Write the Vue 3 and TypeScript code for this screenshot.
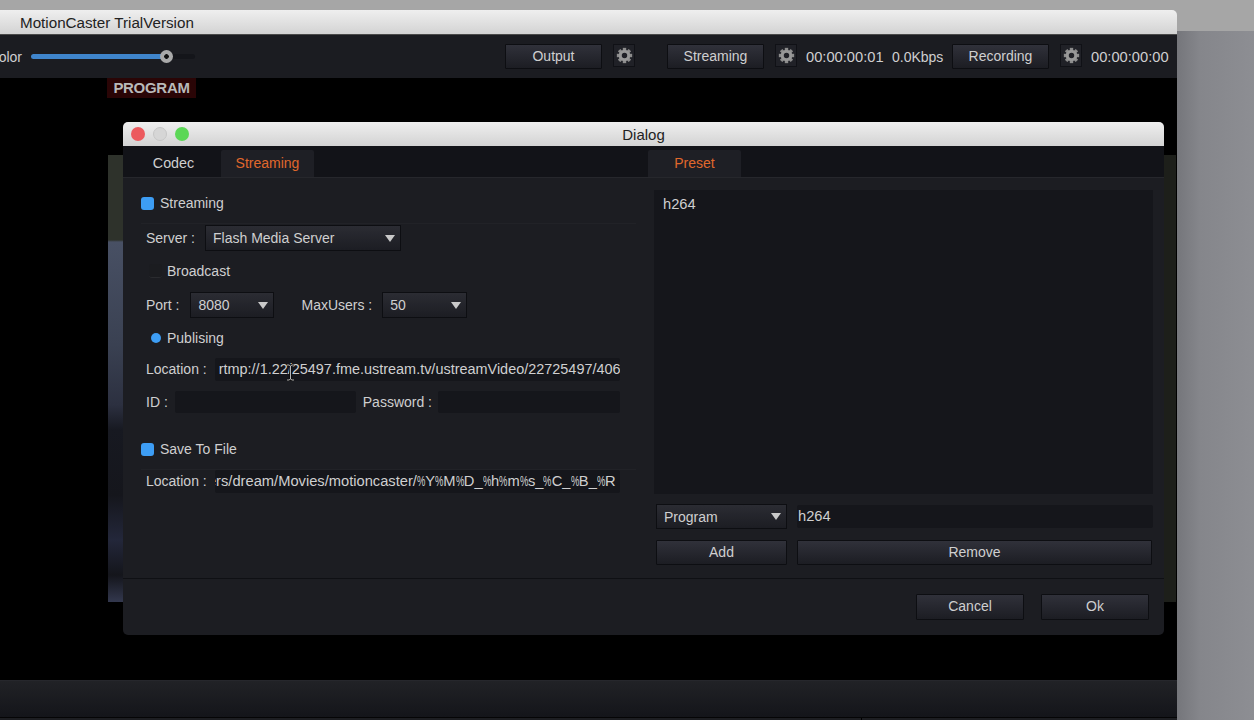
<script setup lang="ts">
const SLIDER_PERCENT = 82.5
const gearTeeth = [0, 45, 90, 135, 180, 225, 270, 315]

const streamUrl = 'rtmp://1.22/25497.fme.ustream.tv/ustreamVideo/22725497/406'
const savePath = 'ers/dream/Movies/motioncaster/%Y%M%D_%h%m%s_%C_%B_%R'
// the % sign is much narrower in the original font, so it gets its own span
const savePathParts = savePath.split(/(%)/).filter(Boolean)
</script>

<template>
  <div class="desktop">
    <svg class="defs" width="0" height="0">
      <symbol id="gear" viewBox="0 0 20 20">
        <rect
          v-for="deg in gearTeeth"
          :key="deg"
          x="8"
          y="1"
          width="4"
          height="5"
          fill="#8c8c8c"
          :transform="`rotate(${deg} 10 10)`"
        />
        <circle cx="10" cy="10" r="5" fill="none" stroke="#989898" stroke-width="3.6" />
      </symbol>
    </svg>

    <div class="main-window">
      <div class="title-bar main-title">MotionCaster TrialVersion</div>

      <div class="toolbar">
        <span class="color-label">Color</span>
        <div class="slider">
          <div class="slider-fill" :style="{ width: `${SLIDER_PERCENT}%` }" />
          <div class="slider-handle" :style="{ left: `${SLIDER_PERCENT}%` }" />
        </div>
        <div class="toolbar-right">
          <button class="btn tool-btn">Output</button>
          <span class="gear-box gap-after-output"><svg width="17" height="17"><use href="#gear" /></svg></span>
          <button class="btn tool-btn">Streaming</button>
          <span class="gear-box"><svg width="17" height="17"><use href="#gear" /></svg></span>
          <span class="time">00:00:00:01</span>
          <span class="rate">0.0Kbps</span>
          <button class="btn tool-btn">Recording</button>
          <span class="gear-box"><svg width="17" height="17"><use href="#gear" /></svg></span>
          <span class="time">00:00:00:00</span>
        </div>
      </div>

      <div class="stage">
        <div class="program-tag">PROGRAM</div>
        <div class="preview" />
      </div>

      <div class="bottom-panel" />
      <div class="bottom-strip"><span class="strip-divider" /></div>
    </div>

    <div class="dialog">
      <div class="title-bar dialog-title">
        <span class="lights">
          <i class="light red" />
          <i class="light grey" />
          <i class="light green" />
        </span>
        Dialog
      </div>

      <div class="dialog-body">
        <section class="left-pane">
          <div class="tabs">
            <span class="tab codec-tab">Codec</span>
            <span class="tab active stream-tab">Streaming</span>
          </div>

          <div class="form">
            <label class="check-row group-head">
              <i class="check on" />Streaming
            </label>

            <div class="row server-row">
              <span class="label">Server :</span>
              <div class="combo server-combo">Flash Media Server<i class="arrow" /></div>
            </div>

            <label class="sub-row broadcast-row">
              <i class="check off" />Broadcast
            </label>

            <div class="row port-row">
              <span class="label">Port :</span>
              <div class="combo port-combo">8080<i class="arrow" /></div>
              <span class="label users-label">MaxUsers :</span>
              <div class="combo users-combo">50<i class="arrow" /></div>
            </div>

            <label class="sub-row publish-row">
              <i class="radio" />Publising
            </label>

            <div class="row location-row">
              <span class="label">Location :</span>
              <div class="input location-input">{{ streamUrl }}</div>
            </div>

            <div class="row id-row">
              <span class="label">ID :</span>
              <div class="input id-input" />
              <span class="label">Password :</span>
              <div class="input password-input" />
            </div>

            <label class="check-row group-head save-head">
              <i class="check on" />Save To File
            </label>

            <div class="row location-row save-row">
              <span class="label">Location :</span>
              <div class="input location-input path-input">
                <span>
                  <template v-for="(part, i) in savePathParts" :key="i">
                    <span v-if="part === '%'" class="pct">%</span>
                    <template v-else>{{ part }}</template>
                  </template>
                </span>
              </div>
            </div>
          </div>
        </section>

        <section class="right-pane">
          <div class="tabs">
            <span class="tab active preset-tab">Preset</span>
          </div>
          <div class="preset-content">
            <div class="preset-list">h264</div>
            <div class="preset-grid">
              <div class="combo program-combo">Program<i class="arrow" /></div>
              <div class="input name-input">h264</div>
              <button class="btn grid-btn">Add</button>
              <button class="btn grid-btn remove-btn">Remove</button>
            </div>
          </div>
        </section>
      </div>

      <div class="dialog-footer">
        <button class="btn footer-btn">Cancel</button>
        <button class="btn footer-btn">Ok</button>
      </div>
    </div>

    <!-- mouse cursor over the url field -->
    <svg class="ibeam" width="9" height="17" viewBox="0 0 9 17">
      <path d="M1 1h2l1.500 1L6 1h2M4.500 2v13M1 16h2l1.500-1L6 16h2" fill="none" stroke="#0c0c0c" stroke-width="2.400" />
      <path d="M1 1h2l1.500 1L6 1h2M4.500 2v13M1 16h2l1.500-1L6 16h2" fill="none" stroke="#c8c8c8" stroke-width="0.900" />
    </svg>
  </div>
</template>

<style>
html,
body {
  margin: 0;
  background: #8b8c91;
}
</style>

<style scoped>
.desktop {
  position: relative;
  width: 1254px;
  height: 720px;
  overflow: hidden;
  font-family: "Liberation Sans", Arial, sans-serif;
  font-size: 14px;
  color: #cfcfd0;
  background:
    linear-gradient(#a6a6a6 0, #a6a6a6 31px, transparent 31px),
    linear-gradient(90deg, #75767b 1177px, #85868b 1200px, #8d8e93 1254px);
}

.defs {
  position: absolute;
}

/* windows sit on a free desktop */
.main-window {
  position: absolute;
  left: -40px;
  top: 10px;
  width: 1217px;
  height: 710px;
  display: flex;
  flex-direction: column;
  border-radius: 5px 5px 0 0;
  overflow: hidden;
}

.title-bar {
  height: 24px;
  flex: none;
  line-height: 25px;
  color: #222;
  background: linear-gradient(#efefef, #d3d3d3);
}

.main-title {
  padding-left: 60px;
  font-size: 15.2px;
  border-bottom: 1px solid #4a4a4a;
}

.toolbar {
  height: 43px;
  flex: none;
  display: flex;
  align-items: center;
  background: #1b1c21;
}

.color-label {
  width: 62px;
  text-align: right;
  margin-right: 9px;
}

.slider {
  position: relative;
  width: 164px;
  height: 5px;
  border-radius: 3px;
  background: #14151a;
}

.slider-fill {
  height: 100%;
  border-radius: 3px;
  background: #3f85cc;
}

.slider-handle {
  position: absolute;
  top: -4px;
  width: 13px;
  height: 13px;
  margin-left: -6.500px;
  border-radius: 50%;
  background: radial-gradient(circle, #111 0 2px, #a9a9a9 2.600px);
}

.toolbar-right {
  margin-left: auto;
  margin-right: 8px;
  display: flex;
  align-items: center;
}

.btn {
  display: block;
  padding: 0 0 1px;
  height: 26px;
  border: 1px solid #0d0e12;
  border-radius: 1px;
  font: inherit;
  color: #cfcfd0;
  text-align: center;
  background: linear-gradient(#30313a, #1c1d23);
}

.tool-btn {
  width: 97px;
  height: 25px;
}

.gear-box {
  width: 22px;
  height: 23px;
  margin: -2px 9px 0 11px;
  display: flex;
  align-items: center;
  justify-content: center;
  box-sizing: border-box;
  border: 1px solid #101116;
  background: #202127;
}

.gap-after-output {
  margin-right: 32px;
}

.time {
  width: 78px;
  white-space: nowrap;
  font-size: 14.7px;
}

.rate {
  width: 51px;
  margin: 0 9px 0 8px;
  white-space: nowrap;
}

.stage {
  position: relative;
  flex: 1;
  background: #000;
}

.program-tag {
  position: absolute;
  left: 147px;
  top: 0;
  width: 89px;
  height: 20px;
  line-height: 20px;
  text-align: center;
  font-weight: 700;
  font-size: 15px;
  letter-spacing: -0.3px;
  color: #b9b9b9;
  background: #2a0506;
}

.preview {
  position: absolute;
  left: 148px;
  right: 0;
  top: 77px;
  height: 447px;
  border-right: 1px solid #000;
  background: linear-gradient(
    #2e322b 0,
    #2e322b 85px,
    #485064 87px,
    #3a4152 190px,
    #2c3040 250px,
    #171921 275px,
    #15161c 340px,
    #23273a 385px,
    #14151b 420px,
    #33384e 447px
  );
}

.preview::after {
  content: "";
  position: absolute;
  left: 15px;
  right: 0;
  top: 0;
  bottom: 0;
  background: #1d1f1a;
}

.bottom-panel {
  height: 36px;
  flex: none;
  border-top: 1px solid #26272c;
  background: linear-gradient(#212226, #14151a);
}

.bottom-strip {
  height: 2px;
  flex: none;
  position: relative;
  border-top: 1px solid #050506;
  background: #1d1e22;
}

.strip-divider {
  position: absolute;
  left: 901px;
  top: 0;
  bottom: 0;
  width: 1px;
  background: #000;
}

.dialog {
  position: absolute;
  left: 123px;
  top: 122px;
  width: 1041px;
  height: 513px;
  display: flex;
  flex-direction: column;
  border-radius: 5px;
  overflow: hidden;
  background: #1c1d22;
}

.dialog-title {
  position: relative;
  text-align: center;
  font-size: 15px;
}

.lights {
  position: absolute;
  left: 8px;
  top: 5px;
  display: flex;
  gap: 8px;
}

.light {
  width: 14px;
  height: 14px;
  border-radius: 50%;
}

.red {
  background: #ec5a5e;
}

.grey {
  box-sizing: border-box;
  border: 1px solid #c6c6c6;
  background: #d6d6d6;
}

.green {
  background: #5bd756;
}

.dialog-body {
  flex: none;
  height: 432px;
  display: grid;
  grid-template-columns: 525px 516px;
}

.tabs {
  height: 32px;
  display: flex;
  align-items: flex-end;
  box-sizing: border-box;
  border-bottom: 1px solid #26272c;
  background: #121318;
}

.tab {
  height: 27px;
  line-height: 27px;
  text-align: center;
  box-sizing: border-box;
}

.tab.active {
  color: #e0682c;
  background: #1e1f25;
  border-radius: 2px 2px 0 0;
}

.codec-tab {
  width: 93px;
  padding-left: 8px;
  font-size: 14.3px;
}

.stream-tab {
  width: 93px;
  margin-left: 5px;
}

.preset-tab {
  width: 93px;
}

.form {
  padding: 0 28px 0 23px;
  position: relative;
}

.check-row,
.sub-row {
  display: flex;
  align-items: center;
  height: 24px;
}

.group-head {
  margin: 13px -16px 0 -5px;
  padding-bottom: 8px;
  height: 24px;
  gap: 6px;
  border-bottom: 1px solid #212227;
}

.check {
  display: block;
  width: 13px;
  height: 13px;
  border-radius: 3px;
}

.check.on {
  background: #3d9df4;
}

.check.off {
  background: #1b1c20;
  border-bottom: 1px solid #2a2b2f;
}

.row {
  display: flex;
  align-items: center;
}

.label {
  white-space: nowrap;
}

.server-row {
  height: 26px;
  margin-top: 1px;
  gap: 10px;
}

.combo {
  position: relative;
  height: 26px;
  line-height: 24px;
  box-sizing: border-box;
  padding-left: 7px;
  border: 1px solid #0d0e12;
  background: linear-gradient(#2b2c33, #1c1d23);
}

.arrow {
  position: absolute;
  right: 5px;
  top: 9px;
  border-left: 5px solid transparent;
  border-right: 5px solid transparent;
  border-top: 7px solid #c9c9c9;
}

.server-combo {
  width: 196px;
}

.broadcast-row {
  margin-top: 8px;
  padding-left: 3px;
  gap: 5px;
}

.port-row {
  height: 26px;
  margin-top: 9px;
}

.port-combo {
  width: 84px;
  margin-left: 11px;
}

.users-label {
  margin-left: 27px;
}

.users-combo {
  width: 85px;
  margin-left: 10px;
}

.publish-row {
  margin-top: 8px;
  padding-left: 5px;
  gap: 6px;
}

.radio {
  display: block;
  width: 10px;
  height: 10px;
  border-radius: 50%;
  background: #3d9df4;
}

.input {
  box-sizing: border-box;
  border-radius: 2px;
  background: #15161b;
  white-space: nowrap;
  overflow: hidden;
}

.location-row {
  margin-top: 8px;
  height: 23px;
}

.location-row .label {
  padding-bottom: 2px;
}

.location-input {
  width: 405px;
  height: 23px;
  line-height: 23px;
  padding: 0 0 0 4px;
  margin-left: 8px;
  font-size: 14.45px;
}

.id-row {
  margin-top: 10px;
  height: 22px;
}

.id-input {
  width: 181px;
  height: 22px;
  margin: 0 7px;
}

.password-input {
  width: 182px;
  height: 22px;
  margin-left: 6px;
}

.save-head {
  margin-top: 24px;
}

.save-row {
  margin-top: 0;
}

.path-input {
  display: flex;
  justify-content: flex-end;
  padding: 0 4px 0 0;
  font-size: 14.7px;
}

.pct {
  display: inline-block;
  width: 8.3px;
  transform: scaleX(0.64);
  transform-origin: left center;
}

.preset-content {
  padding: 12px 11px 0 6px;
}

.preset-list {
  height: 304px;
  box-sizing: border-box;
  padding: 6px 9px;
  font-size: 14.7px;
  background: #15161b;
}

.preset-grid {
  display: grid;
  grid-template-columns: 131px 1fr;
  column-gap: 10px;
  row-gap: 11px;
  margin: 10px 0 0 2px;
}

.program-combo {
  height: 25px;
}

.program-combo .arrow {
  top: 8px;
}

.name-input {
  height: 23px;
  line-height: 23px;
  padding-left: 1px;
  margin-top: 1px;
  font-size: 14.7px;
}

.grid-btn {
  height: 25px;
}

.remove-btn {
  margin-right: 1px;
}

.dialog-footer {
  flex: 1;
  display: flex;
  justify-content: flex-end;
  align-items: flex-start;
  gap: 17px;
  padding: 15px 15px 0 0;
  border-top: 1px solid #0f1014;
}

.footer-btn {
  width: 108px;
  padding-bottom: 2px;
}

.ibeam {
  position: absolute;
  left: 286px;
  top: 364px;
}
</style>
